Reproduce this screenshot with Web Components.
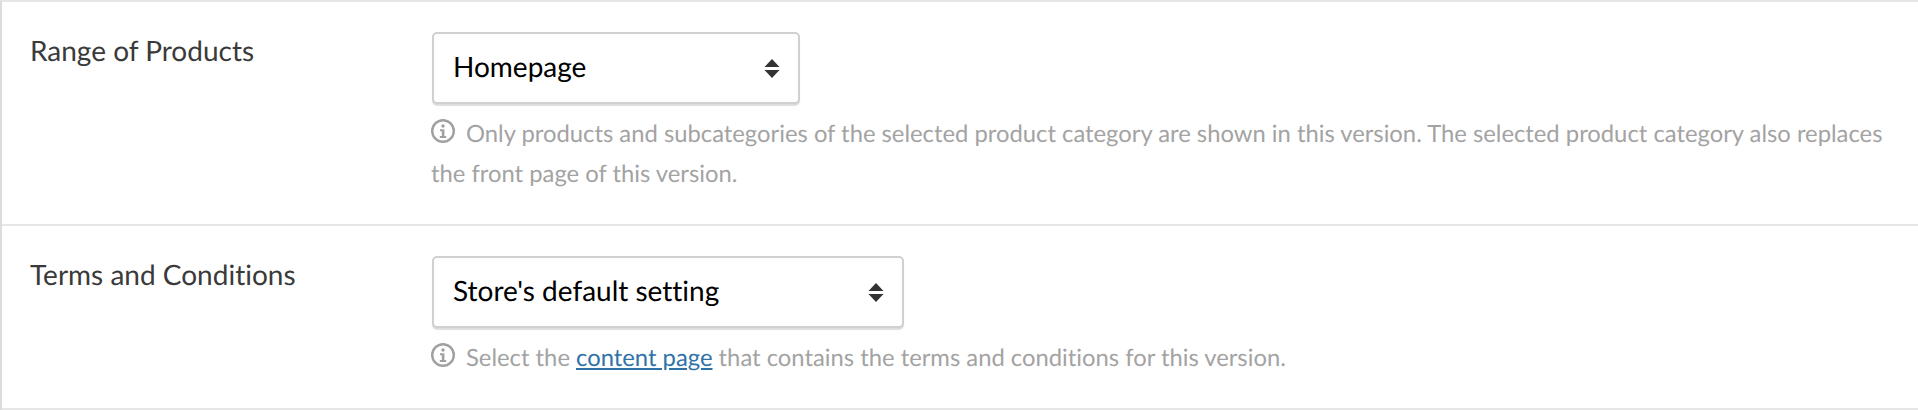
<!DOCTYPE html>
<html><head><meta charset="utf-8"><style>
html,body{margin:0;padding:0;background:#fff}
body{width:1918px;height:410px;overflow:hidden;font-family:Lato,sans-serif;text-rendering:geometricPrecision;font-variant-ligatures:none}
</style></head><body>
<template id="t-panel"><style>
:host{display:block;box-sizing:border-box;height:410px;border-top:2px solid #e6e6e6;border-left:2px solid #dcdcdc;background:#fff}
</style><slot></slot></template>
<template id="t-row"><style>
:host{display:grid;grid-template-columns:401px 1fr;box-sizing:border-box;padding:30px 0 0 28px;border-bottom:2px solid #e6e6e6}
.label{font-size:28px;line-height:36px;color:#3a3a3a;margin:0}
.field{display:flex;flex-direction:column;align-items:flex-start;min-width:0}
</style><div class="label"><slot name="label"></slot></div><div class="field"><slot></slot></div></template>
<template id="t-select"><style>
:host{display:flex;align-items:center;justify-content:space-between;box-sizing:border-box;height:72px;margin-left:1px;padding:0 18px 4px 19px;border:2px solid #d0d0d0;border-radius:5px;background:#fff;box-shadow:0 2px 1px #ddd;font-size:28px;color:#000}
svg{display:block;flex:none;margin-top:4px}
</style><slot></slot><svg width="16" height="24" viewBox="0 0 16 24"><path d="M8 3 15.5 11H.5Z M.5 14H15.5L8 22Z" fill="#333"/></svg></template>
<template id="t-hint"><style>
:host{display:block;font-size:23.8px;line-height:40px;color:#a3a3a3;margin-top:10px}
svg{display:inline-block;vertical-align:-1px;margin-right:11px}
::slotted(a){color:#2f72a8;text-decoration:underline}
</style><svg width="24" height="24" viewBox="0 0 24 24"><circle cx="12" cy="12" r="10.8" fill="none" stroke="#a0a0a0" stroke-width="2.4"/><circle cx="12" cy="7" r="1.7" fill="#a0a0a0"/><path d="M9 10.2h4.4v6.8h1.8v2H8.8v-2h2v-4.8H9Z" fill="#a0a0a0"/></svg><slot></slot></template>
<script>
for(const [n,t] of [['x-panel','t-panel'],['x-row','t-row'],['x-select','t-select'],['x-hint','t-hint']]){
customElements.define(n,class extends HTMLElement{constructor(){super();this.attachShadow({mode:'open'}).appendChild(document.getElementById(t).content.cloneNode(true));}});}
</script>
<x-panel>
<x-row style="height:224px"><span slot="label">Range of Products</span><x-select style="width:368px">Homepage</x-select><x-hint>Only products and subcategories of the selected product category are shown in this version. The selected product category also replaces the front page of this version.</x-hint></x-row>
<x-row style="height:184px"><span slot="label">Terms and Conditions</span><x-select style="width:472px">Store's default setting</x-select><x-hint>Select the <a href="#">content page</a> that contains the terms and conditions for this version.</x-hint></x-row>
</x-panel>
</body></html>
